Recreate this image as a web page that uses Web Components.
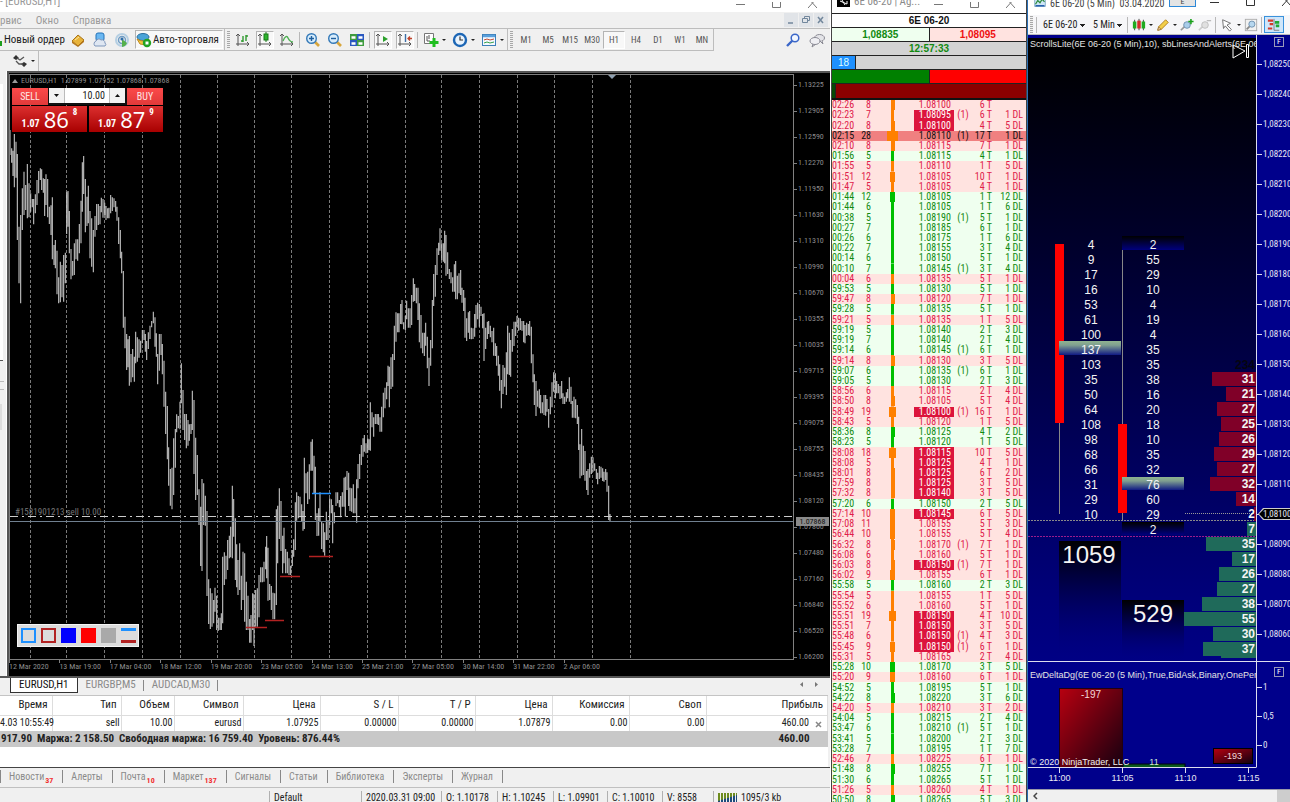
<!DOCTYPE html>
<html lang="ru">
<head>
<meta charset="utf-8">
<title>Trading desktop</title>
<style>
  html, body { margin: 0; height: 100%; }
  body { font-family: "Roboto Condensed", Roboto, "Liberation Sans", sans-serif; font-size: 11px; overflow: hidden; }
</style>
</head>
<body>
<trading-desktop></trading-desktop>
<script>
const RESET = `*{box-sizing:border-box}
button,input,select{font:inherit;color:inherit;margin:0;padding:0;border:0;background:none;border-radius:0}
a{color:inherit;text-decoration:none}table{border-collapse:collapse;border-spacing:0}svg{display:block}`;

class Widget extends HTMLElement {
  constructor() { super(); this.attachShadow({ mode: 'open' }); }
  connectedCallback() {
    const t = document.createElement('template');
    t.innerHTML = `<style>${RESET}${this.css()}</style>${this.html()}`;
    this.shadowRoot.replaceChildren(t.content.cloneNode(true));
  }
  css() { return ':host{display:block}'; }
  html() { return '<slot></slot>'; }
}
const define = (name, css, html) => customElements.define(name, class extends Widget {
  css() { return css; }
  html() { return typeof html === 'function' ? html(this) : html; }
});

/* ---------- icons ---------- */
const ICONS = {
  book: '<path d="M2 9 8 3l6 5-6 6z" fill="#e8b33a" stroke="#a8741a"/><path d="M2 9v2l6 4 6-5V8l-6 6z" fill="#b5761b"/><path d="M5 8l4-3" stroke="#fbe6a0"/>',
  cloudpc: '<rect x="4" y="1" width="8" height="8" rx="2" fill="#6bb8f2" stroke="#2573b8"/><path d="M3 14a3 3 0 0 1 1-5 3 3 0 0 1 5-1 3 3 0 0 1 4 3 2 2 0 0 1 0 3z" fill="#dfe7f2" stroke="#7f97bb"/>',
  signal: '<circle cx="8" cy="8" r="6" fill="none" stroke="#b5cfe3" stroke-width="2"/><circle cx="8" cy="8" r="3.5" fill="none" stroke="#6f9cc4" stroke-width="1.5"/><path d="M8 7v8a6 6 0 0 0 5-4z" fill="#55b04a"/><circle cx="8" cy="7" r="1.6" fill="#2d6da8"/>',
  auto: '<ellipse cx="7" cy="5" rx="6" ry="3.5" fill="#4aa3d8" stroke="#2a6fa0"/><path d="M1 7q6 4 12 0l-3 6-6-1z" fill="#f0c840" stroke="#c08a20"/><circle cx="11" cy="11" r="4.2" fill="#22a322"/><rect x="9.5" y="9.5" width="3" height="3" fill="#fff"/>',
  bars: '<path d="M3 2v12M1 12h13M1 4l2-2 2 2M12 10l2 2-2 2" fill="none" stroke="#555"/><path d="M8 4v6M6 9h2M11 3v6M11 4h2" stroke="#2f9a2f" stroke-width="1.4"/>',
  candles: '<path d="M3 2v12M1 12h13M1 4l2-2 2 2M12 10l2 2-2 2" fill="none" stroke="#555"/><path d="M9 0v10" stroke="#197a19"/><rect x="7" y="2" width="4" height="6" fill="#2db52d" stroke="#197a19"/>',
  line: '<path d="M3 2v12M1 12h13M1 4l2-2 2 2M12 10l2 2-2 2" fill="none" stroke="#555"/><path d="M4 9q3-7 5-3t5 4" fill="none" stroke="#4caf50" stroke-width="1.4"/>',
  zoomin: '<path d="M9 9l5 5" stroke="#d8a63c" stroke-width="2.6"/><circle cx="6.5" cy="6.5" r="4.8" fill="#d7ecfb" stroke="#3479b8" stroke-width="1.4"/><path d="M4 6.500h5M6.500 4v5" stroke="#1f5f9e" stroke-width="1.4"/>',
  zoomout: '<path d="M9 9l5 5" stroke="#d8a63c" stroke-width="2.6"/><circle cx="6.5" cy="6.5" r="4.8" fill="#d7ecfb" stroke="#3479b8" stroke-width="1.4"/><path d="M4 6.500h5" stroke="#1f5f9e" stroke-width="1.4"/>',
  tile: '<rect x="1" y="2" width="7" height="6" fill="#3f9b3f"/><rect x="8" y="2" width="7" height="6" fill="#2a58c0"/><rect x="1" y="8" width="7" height="6" fill="#2a58c0"/><rect x="8" y="8" width="7" height="6" fill="#3f9b3f"/><path d="M2.500 5.500h4M9.500 5.500h4M2.500 11.500h4M9.500 11.500h4" stroke="#fff" stroke-width="2.500"/>',
  shift: '<path d="M3 2v12M1 12h13M1 4l2-2 2 2M12 10l2 2-2 2" fill="none" stroke="#555"/><path d="M8 4l5 3-5 3z" fill="#2ca02c"/>',
  scroll: '<path d="M3 2v12M1 12h13M1 4l2-2 2 2M12 10l2 2-2 2" fill="none" stroke="#555"/><path d="M8.500 2v8" stroke="#3b6ea5" stroke-width="1.4"/><path d="M15 6.500h-4M13 4.500l-2 2 2 2" stroke="#c0432b" fill="none" stroke-width="1.3"/>',
  indicator: '<path d="M1.500 1.500h9v10h-9z" fill="#fff" stroke="#777"/><path d="M4 4v5h3M6 3v4" stroke="#555" fill="none"/><path d="M11 6v9M6.500 10.500h9" stroke="#1fbe1f" stroke-width="3"/>',
  clock: '<circle cx="8" cy="8" r="6" fill="#eaf4fd" stroke="#1c66b5" stroke-width="2.4"/><path d="M8 4.500V8h3" stroke="#333" fill="none" stroke-width="1.2"/>',
  template: '<rect x="1.500" y="2.500" width="13" height="11" fill="#f4f9ff" stroke="#3c7fb8"/><path d="M2 4h12" stroke="#5aa0dc" stroke-width="2.5"/><path d="M3 8l3-1 3 1 4-1" stroke="#c04a30" fill="none"/><path d="M3 11l3-1 3 1 4-1" stroke="#37a14a" fill="none"/>',
  search: '<path d="M8 8l-6 6" stroke="#3a66c8" stroke-width="2.4"/><circle cx="10" cy="6" r="3.800" fill="#f2f7ff" stroke="#3a66c8" stroke-width="1.500"/>',
  chat: '<ellipse cx="10.500" cy="6" rx="5" ry="3.500" fill="#e4e4e8" stroke="#8a8a94"/><path d="M13 9l1 3-3-3" fill="#efeff3" stroke="#8a8a94"/><path d="M4 12l-1 3 4-3" fill="#efeff3" stroke="#8a8a94"/><ellipse cx="6" cy="9" rx="5" ry="3.500" fill="#efeff3" stroke="#8a8a94"/>',
  objects: '<path d="M1 5l3-3 3 3-3 2zM9 11l3-2 3 2-3 3z" fill="#333"/><path d="M5 5l3 2 4-3M4 8l3 3h4" fill="none" stroke="#555" stroke-width="1.300"/>',
  ncandles: '<path d="M3 2v12M8 1v13M13 2v12" stroke="#333"/><rect x="1" y="4" width="4" height="8" fill="#1faa1f"/><rect x="6" y="3" width="4" height="9" fill="#d42a2a"/><rect x="11" y="4" width="4" height="8" fill="#1faa1f"/>',
  pencil: '<path d="M2 14l1-4 8-8 3 3-8 8z" fill="#f2cf4a" stroke="#a8781c"/><path d="M2 14l1-4 3 3z" fill="#e8c9a0" stroke="#805010" stroke-width=".6"/>',
  nzin: '<path d="M6 9l-5 5" stroke="#999" stroke-width="2"/><circle cx="8" cy="8" r="3.800" fill="#a9cdea" stroke="#6b8dac"/><path d="M12.500 1v6M9.500 4h6" stroke="#18a018" stroke-width="1.800"/>',
  nzout: '<path d="M6 9l-5 5" stroke="#ccc" stroke-width="2"/><circle cx="8" cy="8" r="3.800" fill="#e0e0e0" stroke="#bbb"/><path d="M10 3h5" stroke="#bbb" stroke-width="1.500"/>',
  cursor: '<path d="M3 2l9 4-4 2 5 5-2 2-5-6-2 3z" fill="#fff" stroke="#666"/>',
  nbox: '<rect x="1.500" y="1.500" width="13" height="13" fill="#f1f1f1" stroke="#aaa"/><path d="M7 9l-4 4" stroke="#888" stroke-width="2"/><circle cx="9" cy="7" r="3.500" fill="#b6d7ef" stroke="#6b8dac"/>',
  dom: '<path d="M1 3h6M3 7h4M1 12h5" stroke="#d43a2a" stroke-width="2.400"/><path d="M9 5h5M10 9h4" stroke="#22aa33" stroke-width="3"/><path d="M8 1v13h6" stroke="#777" fill="none"/>',
  nlogo: '<rect x="1" y="2" width="14" height="12" fill="#cfe6f7" stroke="#6f9dbd"/><path d="M2 11l3-5 3 3 3-5 3 4" stroke="#2c8b3c" fill="none" stroke-width="1.600"/><path d="M2 13h12" stroke="#2a62b0" stroke-width="2"/>'
};
define('ui-icon', ':host{display:inline-block;width:14px;height:14px;flex:none}svg{width:100%;height:100%}',
  el => `<svg viewBox="0 0 16 16" aria-hidden="true">${ICONS[el.getAttribute('name')] || ''}</svg>`);

/* icon button, with optional menu arrow */
define('tool-button', `:host{display:flex;width:22px;flex:none}
:host([menu]){width:29px}
button{flex:1;display:flex;align-items:center;justify-content:center;gap:3px;height:18px;border:1px solid transparent}
:host([on]) button{background:#f8f8f8;border-color:#b4b4b4 #fff #fff #b4b4b4;margin:0 2px}
:host([active]) button{background:#cfe6fa;border:1px solid #3a92dc;height:17px}
ui-icon{width:var(--icon,14px);height:var(--icon,14px)}
i{display:none;border:2px solid transparent;border-top-color:#222;border-bottom:0;flex:none}
:host([menu]) i{display:block}`,
  el => `<button type="button" aria-label="${el.getAttribute('name')}"><ui-icon name="${el.getAttribute('name')}"></ui-icon><i></i></button>`);

define('tool-sep', ':host{display:block;width:1px;height:16px;background:#b8b8b8;margin:0 2px 0 1px;flex:none}', '');
define('tool-grip', ':host{display:block;width:3px;height:17px;margin:0 2px;flex:none;background:repeating-linear-gradient(#a8a8a8 0 1px,#f0f0f0 1px 2px)}', '');

define('window-buttons', `:host{display:flex;align-items:center;color:#777;flex:none}
button{width:36px;height:8px;display:grid;place-items:center}`,
  () => `<button aria-label="Minimize"><svg width="9" height="8"><path d="M0 2.500h9" stroke="currentColor"/></svg></button>
<button aria-label="Maximize"><svg width="9" height="8"><path d="M.5-3V5.500h8V-3" fill="none" stroke="currentColor"/></svg></button>
<button aria-label="Close"><svg width="9" height="8"><path d="M0 6l9-10M9 6L0-4" stroke="currentColor"/></svg></button>`);

/* ---------- terminal window ---------- */
define('terminal-menu', `:host{display:flex;flex-direction:column;background:#f0f0f0}
.title{height:12px;background:#fff;display:flex;justify-content:space-between;color:#999;font-size:11px;line-height:4px}
.menu{height:16px;display:flex;align-items:center;gap:14px;color:#9b9b9b;font-size:11px}
.menu span{flex:1}.mdi{display:flex;gap:1px;margin-right:2px}
.mdi button{width:14px;height:14px;background:#e1e4e8;color:#72879c;display:grid;place-items:center}`,
`<div class="title"><span>- [EURUSD,H1]</span><window-buttons></window-buttons></div>
<nav class="menu"><a href="#service">рвис</a><a href="#window">Окно</a><a href="#help">Справка</a><span></span>
<div class="mdi"><button aria-label="Minimize chart"><svg width="8" height="8"><path d="M1 7h5" stroke="currentColor" stroke-width="1.500"/></svg></button>
<button aria-label="Restore chart"><svg width="8" height="8"><path d="M2.500 2.500v-2h5v4h-2M.5 2.500h5v4h-5z" fill="none" stroke="currentColor"/></svg></button>
<button aria-label="Close chart"><svg width="8" height="8"><path d="M1 1l5 6M6 1L1 7" stroke="currentColor" stroke-width="1.500"/></svg></button></div></nav>`);

define('terminal-toolbar', `:host{display:flex;flex-direction:column;background:#f0f0f0;color:#222;--icon:16px}
.row{display:flex;align-items:center;height:23px;border-top:1px solid #bdbdbd}
.group{display:flex;align-items:center;height:22px;border-right:1px solid #bdbdbd;border-bottom:1px solid #bdbdbd}
.order{width:67px;text-align:left;padding-left:2px;border-left:2px solid;border-image:linear-gradient(transparent 60%,#1d9d1d 60%) 1;white-space:nowrap}
.auto{display:flex;align-items:center;gap:1px;height:19px;width:88px;background:#f8f8f8;border:1px solid #b4b4b4;border-right-color:#fff;border-bottom-color:#fff;margin:0 1px 0 2px;white-space:nowrap}
.tf{width:22px;height:18px;font-size:9px;color:#555;border:1px solid transparent}
.tf.on{background:#f8f8f8;border-color:#b4b4b4 #fff #fff #b4b4b4}
.spacer{flex:1}.right{display:flex;gap:2px;padding-right:2px}
.second{height:20px;border:0}.second .group{height:20px;border-bottom:0;width:39px;padding-left:9px}
ui-icon{width:16px;height:16px}`,
`<div class="row"><div class="group"><button class="order">Новый ордер</button>
<tool-button name="book"></tool-button><tool-button name="cloudpc"></tool-button><tool-button name="signal"></tool-button>
<button class="auto"><ui-icon name="auto"></ui-icon>Авто-торговля</button></div>
<div class="group"><tool-grip></tool-grip><tool-button name="bars"></tool-button><tool-button name="candles" on></tool-button><tool-button name="line"></tool-button><tool-sep></tool-sep>
<tool-button name="zoomin"></tool-button><tool-button name="zoomout"></tool-button><tool-button name="tile"></tool-button><tool-sep></tool-sep>
<tool-button name="shift" on></tool-button><tool-button name="scroll" on></tool-button><tool-sep></tool-sep>
<tool-button name="indicator" menu></tool-button><tool-button name="clock" menu></tool-button><tool-button name="template" menu></tool-button></div>
<div class="group"><tool-grip></tool-grip>${['M1','M5','M15','M30','H1','H4','D1','W1','MN'].map(t => `<button class="tf${t === 'H1' ? ' on' : ''}">${t}</button>`).join('')}</div>
<span class="spacer"></span><div class="right"><tool-button name="search"></tool-button><tool-button name="chat"></tool-button></div></div>
<div class="row second"><div class="group"><tool-button name="objects" menu></tool-button></div></div>`);

/* price bars: x, high, low in thirds of a pixel, measured from the chart's origin */
const BARS = `30,0,75 35,55,98 39,62,138 43,12,172 48,35,143 52,72,330 57,290,460 62,255,520 67,175,300 72,125,255 77,165,240 82,102,265 87,160,262 92,190,245 97,207,232 101,207,283 106,193,250 111,150,225 116,123,190 121,115,150 125,118,180 130,145,188 134,147,258 138,133,225 143,147,262 148,230,282 153,226,315 157,202,388 162,345,405 166,330,415 171,362,493 176,442,520 181,395,517 186,405,502 191,375,515 196,368,460 200,187,312 204,183,290 208,243,370 213,357,448 218,393,437 223,340,435 228,328,388 233,328,392 238,282,370 243,212,340 247,97,245 251,78,192 256,147,307 261,200,288 265,167,280 270,243,385 275,265,410 280,300,427 285,258,320 290,222,300 295,222,285 300,228,283 304,203,247 309,207,263 314,218,255 318,228,270 323,235,265 327,233,265 332,195,250 337,202,243 342,205,232 347,213,245 351,230,272 356,262,342 361,300,385 365,365,430 370,423,593 375,560,655 380,612,720 384,628,712 388,618,767 393,672,757 398,657,742 403,680,755 407,605,700 412,622,695 417,628,683 422,632,668 427,600,640 432,600,630 436,612,665 440,633,690 445,607,657 450,587,627 455,573,592 460,545,580 465,562,650 469,610,680 473,672,763 478,612,722 483,612,675 487,642,733 492,692,830 497,785,912 502,828,988 506,952,1067 511,1017,1127 516,1013,1138 521,925,1095 526,897,1013 530,853,907 535,858,895 540,815,898 544,700,820 549,780,900 554,852,930 559,852,955 564,870,947 568,883,932 573,882,912 577,782,900 582,810,1032 587,923,1110 592,975,1095 597,1078,1185 602,1130,1308 606,1047,1323 611,1060,1185 616,1097,1187 621,1143,1398 626,1348,1482 631,1375,1497 636,1390,1490 641,1410,1480 645,1373,1445 650,1397,1500 655,1463,1502 660,1463,1500 664,1450,1500 668,1280,1480 673,1267,1365 678,1277,1348 683,1230,1320 688,1217,1285 692,1190,1282 697,1067,1285 701,1107,1220 706,1165,1350 710,1243,1372 714,1290,1395 719,1240,1380 724,1337,1440 729,1265,1410 734,1270,1475 739,1355,1500 744,1397,1500 749,1467,1538 753,1455,1538 758,1390,1500 762,1393,1548 767,1380,1490 772,1375,1490 777,1335,1462 782,1312,1357 787,1312,1357 792,1295,1355 797,1250,1318 800,1218,1345 804,1253,1412 809,1362,1410 814,1368,1440 819,1388,1468 824,1390,1468 829,1138,1425 833,1127,1300 838,1075,1227 843,1113,1263 848,1217,1330 852,1193,1300 857,1257,1330 862,1265,1330 867,1285,1335 872,1307,1335 877,1260,1308 881,1228,1280 886,1117,1260 890,1087,1172 895,1098,1165 900,1100,1162 905,1123,1175 909,1143,1202 913,983,1197 918,1030,1090 923,1025,1122 928,1003,1108 933,935,1022 937,928,1022 942,977,1092 946,1010,1170 951,1150,1218 956,1135,1217 960,1087,1175 965,1175,1257 970,1180,1267 974,1207,1277 979,1145,1230 984,1170,1230 989,1105,1185 994,1108,1150 998,1125,1240 1003,1147,1180 1008,1087,1128 1013,1087,1120 1018,1110,1132 1022,1098,1162 1027,1087,1130 1032,1043,1130 1036,1040,1160 1041,1023,1080 1046,1028,1128 1050,1073,1143 1055,1075,1145 1060,1063,1150 1065,1105,1150 1070,1048,1178 1074,1002,1075 1079,972,1047 1084,945,1005 1089,925,980 1093,915,965 1098,940,970 1103,925,968 1107,928,960 1111,817,962 1116,847,892 1121,862,920 1126,852,882 1131,852,882 1135,852,885 1140,862,905 1145,830,905 1150,788,862 1155,773,835 1160,757,808 1164,707,768 1168,710,832 1173,682,777 1178,672,770 1183,587,690 1188,547,635 1193,550,607 1197,550,607 1202,522,582 1206,510,583 1211,577,598 1216,557,600 1220,512,568 1225,535,593 1230,535,593 1235,495,585 1240,445,515 1244,462,513 1249,473,520 1254,473,570 1258,520,637 1263,555,655 1268,608,670 1273,608,678 1277,578,647 1282,620,715 1287,683,768 1292,630,707 1297,510,655 1301,432,528 1306,405,500 1311,355,435 1316,338,375 1320,295,362 1325,340,390 1330,340,395 1334,302,400 1338,315,437 1343,367,432 1348,417,447 1353,427,460 1358,442,485 1363,403,485 1367,393,508 1372,437,508 1377,430,490 1382,420,495 1386,473,518 1391,480,543 1395,503,623 1400,565,633 1405,547,608 1409,543,627 1414,593,628 1419,595,627 1424,552,620 1428,525,593 1433,518,568 1438,522,590 1443,530,558 1448,552,595 1452,550,693 1457,593,657 1462,575,627 1466,573,612 1471,587,622 1476,603,637 1481,593,677 1486,640,678 1490,648,707 1495,677,737 1499,703,782 1504,750,835 1509,705,792 1514,713,770 1519,667,795 1523,587,733 1528,608,735 1532,630,740 1537,597,665 1542,575,648 1547,575,618 1551,558,590 1556,563,602 1561,565,600 1566,573,602 1571,573,637 1575,585,640 1580,578,617 1585,582,615 1589,573,617 1594,590,700 1599,673,757 1603,733,825 1608,753,858 1613,782,830 1618,778,835 1622,795,850 1627,817,850 1632,795,855 1637,795,857 1641,807,845 1646,837,893 1651,800,853 1656,757,832 1661,727,785 1666,730,805 1670,753,790 1675,762,790 1680,768,807 1685,753,805 1689,790,822 1694,800,822 1699,787,815 1703,777,805 1708,742,815 1713,770,822 1717,813,863 1722,800,863 1727,808,865 1732,825,882 1736,860,960 1740,943,1045 1745,897,1037 1750,947,1035 1755,963,1052 1760,1023,1080 1764,1017,1095 1769,1000,1043 1774,980,1032 1779,982,1025 1784,1000,1022 1789,1017,1047 1793,1028,1063 1798,1008,1047 1803,1010,1043 1808,1015,1053 1812,1025,1055 1817,1017,1050 1821,1027,1085 1826,1067,1170 1830,1152,1175`
  .split(' ').map(s => s.split(',').map(n => n / 3));
const GRID_X = [30, 66, 104, 142, 180, 217, 254, 291, 329, 367, 405, 441, 479, 517, 554, 592, 630];
const MARKS = [[309, 556, 24], [280, 576, 20], [265, 620, 19], [246, 627, 21]];

define('one-click-trade', `:host{display:grid;grid-template-columns:75px 74px;gap:1px 2px;color:#fff;width:151px}
.top{grid-column:1/3;display:flex;height:17px}
.top>button{width:36px;font-size:10px;background:linear-gradient(#fb4a4a,#e23a3a);color:#ffe4e4}
.vol{flex:1;display:flex;background:#111;color:#222;padding:0 2px 2px 1px}
.vol button{width:15px;background:#f2f2f2;display:grid;place-items:center}
.vol input{flex:1;width:20px;min-width:0;text-align:right;padding-right:4px;background:#fff;font-size:10px;border-left:1px solid #bbb;border-right:1px solid #bbb}
.px{height:26px;background:linear-gradient(#dc2f2f,#a80000);display:flex;align-items:flex-end;justify-content:center;gap:4px;padding-bottom:3px}
.px small{font:bold 10px/11px "Roboto Condensed",sans-serif}.px b{font:22px/20px "Open Sans",sans-serif}.px sup{font:bold 9px/9px "Roboto Condensed",sans-serif;align-self:flex-start;padding-top:2px}`,
`<div class="top"><button>SELL</button><div class="vol"><button aria-label="Less"><svg width="5" height="3"><path d="M0 0h5L2.500 3z" fill="#111"/></svg></button><input aria-label="Volume" value="10.00"><button aria-label="More"><svg width="5" height="3"><path d="M0 3h5L2.500 0z" fill="#111"/></svg></button></div><button>BUY</button></div>
<button class="px"><small>1.07</small><b>86</b><sup>8</sup></button><button class="px"><small>1.07</small><b>87</b><sup>9</sup></button>`);

define('object-palette', `:host{display:flex;align-items:center;gap:5px;background:#dcdcdc;border:1px solid #f4f4f4;padding:0 3px;height:23px;width:122px}
button{width:15px;height:15px;flex:none}.lines{display:flex;flex-direction:column;justify-content:space-between}
.lines span{height:3px;background:#1e90ff}.lines span+span{background:#b22222}`,
`<button aria-label="Blue frame" style="border:2px solid #1e90ff"></button><button aria-label="Red frame" style="border:2px solid #b22222"></button>
<button aria-label="Blue" style="background:#00f"></button><button aria-label="Red" style="background:red"></button>
<button aria-label="Gray" style="background:#a9a9a9"></button><button class="lines" aria-label="Lines"><span></span><span></span></button>`);

define('price-chart', `:host{display:grid;grid-template-columns:minmax(0,1fr) 36px;grid-template-rows:minmax(0,1fr) 16px;background:#000;border-left:2px solid #555;border-top:2px solid #555;position:relative;color:#8c8c8c;font-size:8px;overflow:hidden}
.plot{width:100%;height:100%}
.plotbox{overflow:hidden;border:1px solid #808080;margin-top:1px}
ol{list-style:none;margin:0;padding:0}
.prices li{height:26px;line-height:26px;padding-left:4px;background:linear-gradient(#808080,#808080) 0 50%/3px 1px no-repeat}
.prices{margin-top:-1px;overflow:visible;height:0}
.dates{display:grid;grid-template-columns:repeat(12,1fr);width:605px;white-space:nowrap;line-height:14px}
.dates li{background:linear-gradient(#808080,#808080) 0 0/1px 3px no-repeat}
.head{position:absolute;left:3px;top:3px;line-height:10px;white-space:pre}
.head svg{display:inline-block;margin-right:3px}
.order{position:absolute;left:6px;top:434px;line-height:10px;font-size:9px;color:#777}
.tag{position:absolute;right:1px;top:444px;height:9px;line-height:9px;width:33px;text-align:center;background:#8a8a8a;color:#111}
one-click-trade{position:absolute;left:3px;top:15px}object-palette{position:absolute;left:8px;bottom:29px}`,
() => {
  const bars = BARS.map(([x, h, l]) => `M${x.toFixed(2)} ${(h + 130).toFixed(1)}V${(l + 130).toFixed(1)}`).join('');
  return `<div class="plotbox"><svg class="plot" role="img" aria-label="EURUSD H1">
${GRID_X.map(x => `<line x1="${x - 9.5}" x2="${x - 9.5}" y1="0" y2="100%" stroke="#7a7a7a" stroke-dasharray="3 2"/>`).join('')}
<g transform="translate(-10 -75)"><path d="${bars}" stroke="#c4c4c4" fill="none" stroke-width="1.100"/>
${MARKS.map(([x, y, w]) => `<path d="M${x} ${y + .5}h${w}" stroke="#b22222" stroke-width="1.500"/>`).join('')}
<path d="M312 493.500h19" stroke="#1e90ff" stroke-width="1.500"/><path d="M608 75h8l-4 4z" fill="#8fa0b0"/></g>
<line x1="0" x2="100%" y1="441.500" y2="441.500" stroke="#ccc" stroke-dasharray="8 4 2 4"/>
<line x1="0" x2="100%" y1="446.500" y2="446.500" stroke="#708090"/></svg></div>
<ol class="prices">${'1.13225 1.12905 1.12590 1.12270 1.11950 1.11630 1.11310 1.10990 1.10670 1.10355 1.10035 1.09715 1.09395 1.09075 1.08755 1.08435 1.08120 1.07800 1.07480 1.07160 1.06840 1.06520 1.06200'.split(' ').map(p => `<li>${p}</li>`).join('')}</ol>
<ol class="dates">${['12 Mar 2020','13 Mar 19:00','17 Mar 04:00','18 Mar 12:00','19 Mar 20:00','23 Mar 05:00','24 Mar 13:00','25 Mar 21:00','27 Mar 05:00','30 Mar 14:00','31 Mar 22:00','2 Apr 06:00'].map(d => `<li>${d}</li>`).join('')}</ol>
<div class="head"><svg width="6" height="4"><path d="M0 4h6L3 0z" fill="#999"/></svg>EURUSD,H1  1.07899 1.07952 1.07868 1.07868</div>
<div class="order">#1581901213 sell 10.00</div><div class="tag">1.07868</div>
<one-click-trade></one-click-trade><object-palette></object-palette>`;
});

define('watch-edge', `:host{display:block;background:#f0f0f0;border-right:1px solid #fff}
div{height:277px;margin-top:13px;background:#fff;border-bottom:1px solid #555;width:3px}
p{margin:20px 0 0;height:9px;border:solid #bbb;border-width:1px 0;width:4px}p+p{margin-top:14px;height:26px;background:#ddd;width:2px;border:0}`,
  '<div></div><p></p><p></p>');

define('chart-tabs', `:host{display:flex;height:19px;background:#f0f0f0;border-top:2px solid #555;padding-left:10px;align-items:flex-start;color:#8a8a8a;font-size:11px}
a{line-height:14px;padding:0 8px;white-space:nowrap;position:relative}
a+a::after{content:"";position:absolute;right:0;top:2px;height:11px;border-right:1px solid #888}
a.on{background:#fff;color:#111;border:1px solid #333;border-top:0}
span{flex:1}button{width:15px;height:13px}`,
`<a class="on" href="#eurusd">EURUSD,H1</a><a href="#eurgbp">EURGBP,M5</a><a href="#audcad">AUDCAD,M30</a><span></span>
<button aria-label="Previous"><svg width="3" height="5"><path d="M3 0v5L0 2.500z" fill="#777"/></svg></button><button aria-label="Next"><svg width="3" height="5"><path d="M0 0v5l3-2.500z" fill="#777"/></svg></button>`);

define('trade-table', `:host{display:block;background:#fff;border-top:1px solid #c4c4c4;height:72px;margin-right:2px;overflow:hidden}
table{width:100%;table-layout:fixed;text-align:right;color:#222}
th{font-weight:400;height:19px;padding:0 4px 0 0;border-right:1px solid #ddd;border-bottom:1px solid #ddd}
tbody td{height:16px;font-size:10px;padding:0 1px 0 0;border-right:1px solid #ddd;white-space:nowrap}
tbody td:first-child{text-align:left}
tbody td:last-child,tfoot td:last-child{padding-right:18px;position:relative}
tfoot td{background:#c8c8c8;height:15px;font-weight:700;white-space:nowrap}tfoot td:first-child{text-align:left}
button{position:absolute;right:5px;top:5px;width:7px;height:7px}
td,th{line-height:14px}`,
`<table><colgroup>${[52, 69, 53, 69, 77, 78, 77, 77, 77, 77].map(w => `<col style="width:${w}px">`).join('')}<col></colgroup>
<thead><tr>${['Время', 'Тип', 'Объем', 'Символ', 'Цена', 'S / L', 'T / P', 'Цена', 'Комиссия', 'Своп', 'Прибыль'].map(h => `<th scope="col">${h}</th>`).join('')}</tr></thead>
<tfoot><tr><td colspan="6">917.90&nbsp; Маржа: 2 158.50&nbsp; Свободная маржа: 16 759.40&nbsp; Уровень: 876.44%</td><td colspan="5">460.00</td></tr></tfoot>
<tbody><tr>${['4.03 10:55:49', 'sell', '10.00', 'eurusd', '1.07925', '0.00000', '0.00000', '1.07879', '0.00', '0.00'].map(h => `<td>${h}</td>`).join('')}<td>460.00<button aria-label="Close order"><svg width="7" height="7"><path d="M1 1l5 5M6 1L1 6" stroke="#888" stroke-width="1.500"/></svg></button></td></tr></tbody></table>`);

define('terminal-tabs', `:host{display:flex;height:20px;background:#f0f0f0;border-top:1px solid #444;color:#8a8a8a;padding-top:2px;font-size:10px}
a{line-height:13px;height:13px;padding:0 9px 0 8px;border-left:1px solid #888;white-space:nowrap}
a:last-child{border-right:1px solid #888}
sub{color:#f03030;font-size:8px;font-weight:700;line-height:0;vertical-align:-3px;margin-left:1px}`,
`<a href="#news">Новости<sub>37</sub></a><a href="#alerts">Алерты</a><a href="#mail">Почта<sub>10</sub></a><a href="#market">Маркет<sub>137</sub></a><a href="#signals">Сигналы</a><a href="#articles">Статьи</a><a href="#library">Библиотека</a><a href="#experts">Эксперты</a><a href="#journal">Журнал</a>`);

define('status-bar', `:host{display:flex;height:15px;background:#f0f0f0;border-top:1px solid #c0c0c0;color:#222;font-size:10px;padding-top:3px}
span{border-left:1px solid #b0b0b0;padding-left:4px;line-height:13px;white-space:nowrap;height:12px}
.gap{flex:0 0 269px;border:0}.net{display:flex;gap:4px;flex:1}.net svg{margin-top:1px}`,
`<span class="gap"></span><span style="flex:0 0 92px">Default</span><span style="flex:0 0 80px">2020.03.31 09:00</span><span style="flex:0 0 56px">O: 1.10178</span><span style="flex:0 0 56px">H: 1.10245</span><span style="flex:0 0 54px">L: 1.09901</span><span style="flex:0 0 55px">C: 1.10010</span><span style="flex:0 0 51px">V: 8558</span>
<span class="net"><svg width="19" height="11"><path d="M0 1h19v5L0 10z" fill="#6e8c1f"/><path d="M0 11V9l19-6v8z" fill="#1d4a7c"/><path d="M2.500 0v11M5.500 0v11M8.500 0v11M11.500 0v11M14.500 0v11M17.500 0v11" stroke="#f0f0f0"/></svg>1095/3 kb</span>`);

define('terminal-window', `:host{display:flex;flex-direction:column;min-width:0;background:#f0f0f0;overflow:hidden}
.work{flex:1;min-height:0;display:grid;grid-template-columns:7px minmax(0,1fr)}`,
`<terminal-menu></terminal-menu><terminal-toolbar></terminal-toolbar><div class="work"><watch-edge></watch-edge><price-chart></price-chart></div>
<chart-tabs></chart-tabs><trade-table></trade-table><terminal-tabs></terminal-tabs><status-bar></status-bar>`);

/* ---------- tape window ---------- */
/* side (r sell, g buy, R highlighted), x = boxed price; time, count, price, flag, trades, delta */
const TAPE = `r 02:26 8 100 0 6 -|rx 02:23 7 095 1 6 1|rx 02:20 8 100 0 4 5|R 02:15 28 110 1 17 1|r 02:10 8 115 0 7 1|g 01:56 5 115 0 4 1|r 01:55 5 110 0 1 5|r 01:51 12 105 0 10 1|r 01:47 5 105 0 4 1|g 01:44 12 105 0 1 12|g 01:44 6 105 0 1 6|g 00:38 5 190 1 5 1|g 00:27 7 185 0 6 1|g 00:26 6 175 0 1 6|g 00:22 7 155 0 3 4|g 00:14 6 150 0 5 1|g 00:10 7 145 1 3 4|r 00:04 6 135 0 5 1|g 59:53 5 130 0 5 1|r 59:47 8 120 0 7 1|g 59:28 5 135 0 5 1|r 59:21 5 135 0 1 5|g 59:19 5 140 0 2 3|g 59:19 7 140 0 2 4|g 59:14 6 145 1 6 1|r 59:14 8 130 0 3 5|g 59:07 6 135 1 6 1|g 59:05 5 130 0 2 3|r 58:56 6 115 0 2 4|r 58:50 8 105 0 5 4|rx 58:49 19 100 1 16 1|r 58:43 5 120 0 1 5|g 58:36 8 125 0 4 2|g 58:23 5 120 0 1 5|rx 58:08 18 115 0 10 5|rx 58:08 5 125 0 4 1|rx 58:01 8 125 0 6 2|rx 57:59 8 125 0 3 5|rx 57:32 8 140 0 3 5|g 57:20 6 150 0 2 5|rx 57:14 10 145 0 6 5|r 57:08 11 155 0 5 3|r 56:44 10 155 0 5 4|r 56:32 8 170 1 7 1|r 56:08 6 160 0 5 1|rx 56:03 8 150 1 7 1|r 56:02 9 155 0 6 1|g 55:58 5 160 0 2 3|r 55:54 5 155 0 1 5|r 55:52 6 160 0 5 1|rx 55:51 19 150 0 4 10|rx 55:51 7 150 0 3 5|rx 55:48 6 150 1 4 3|rx 55:45 9 150 1 6 1|r 55:31 5 165 0 2 4|g 55:28 10 170 0 3 5|r 55:20 9 160 0 6 1|g 54:52 5 195 0 5 1|g 54:22 8 220 0 3 6|r 54:20 5 210 0 3 2|g 54:04 5 215 0 2 4|g 53:47 6 210 1 5 1|g 53:41 5 200 0 2 3|g 53:28 7 195 0 1 7|r 52:46 7 225 0 6 1|g 51:48 8 255 0 7 1|g 51:30 6 265 0 5 1|r 51:26 5 260 0 4 1|g 50:50 8 265 0 5 3`.split('|').map(r => r.split(' '));
const barWidth = n => n > 25 ? 11 : n > 15 ? 7 : n > 8 ? 5 : n > 7 ? 4 : 3;

define('tape-list', `:host{display:flex;min-height:0;overflow:hidden;background:#fff;border-top:2px solid #111}
table{width:100%;table-layout:fixed;font-size:10px;height:calc(100% + 4px)}
tr{height:10px}td{padding:0;line-height:10px;text-align:right;white-space:nowrap}
td:first-child{text-align:left}td:last-child{padding-right:3px}
.r{background:#ffe3e0;color:#e0204a}.g{background:#efffef;color:#118a11}.R{background:#f08080;color:#111}
td.bar{position:relative;text-align:center;background:linear-gradient(var(--c),var(--c)) center/3px 100% no-repeat}
td.bar i{display:block;margin:0 auto;height:10px;background:var(--c)}
.r,.R{--c:#ff8000}.g{--c:#00c000}
td.price{padding-right:3px}.x td.price{background:#dc143c;color:#fff}td.flag{text-align:center}`,
() => `<table aria-label="Time and sales"><colgroup><col style="width:26px"><col style="width:13px"><col style="width:43px"><col style="width:40px"><col style="width:18px"><col style="width:20px"><col></colgroup><tbody>${TAPE.map(([s, t, n, p, f, k, d]) =>
  `<tr class="${s[0]}${s[1] ? ' x' : ''}"><td>${t}</td><td>${n}</td><td class="bar"><i style="width:${barWidth(+n)}px"></i></td><td class="price">1.08${p}</td><td class="flag">${+f ? '(1)' : ''}</td><td>${k} T</td><td>${d === '-' ? '' : d + ' DL'}</td></tr>`).join('')}</tbody></table>`);

define('tape-window', `:host{display:flex;flex-direction:column;min-width:0;background:#fff;border:solid #444;border-width:0 1px;overflow:hidden;font-family:"Liberation Sans",Arial,sans-serif}
.title{height:12px;display:flex;justify-content:space-between;padding-left:5px;color:#8a8a8a;font:11px/4px "Roboto Condensed",sans-serif;white-space:nowrap}
.title>span{display:flex;gap:4px}.logo{width:13px;height:7px;background:#000;flex:none}
.row{display:flex;height:14px;line-height:13px;border-top:1px solid #222;font-size:10px;font-weight:700;text-align:center;flex:none}
.row>*{flex:1}.row>*+*{border-left:1px solid #222}
tape-list{flex:1;font-family:"Roboto Condensed",Roboto,sans-serif}`,
`<div class="title"><span><svg class="logo" viewBox="0 0 13 7"><path d="M3 1l7 3M5 0l3 5M10 1v3" stroke="#fff"/></svg>6E 06-20 | Ag...</span><window-buttons></window-buttons></div>
<div class="row" style="margin-top:1px;color:#111"><span>6E 06-20</span></div>
<div class="row"><span style="background:#efffef;color:#118a11">1,08835</span><span style="background:#ffe3e0;color:#e11">1,08095</span></div>
<div class="row" style="background:#d3d3d3;color:#118a11"><span>12:57:33</span></div>
<div class="row" style="background:#d3d3d3"><span style="flex:0 0 23px;background:#1e90ff;color:#dff;font-weight:400">18</span><span></span></div>
<div class="row"><span style="background:#008000"></span><span style="background:red"></span></div>
<div class="row" style="height:15px"><span style="flex:0 0 3px;background:#064a06"></span><span style="background:#8b0000"></span></div>
<tape-list></tape-list>`);

/* ---------- footprint window ---------- */
const FOOT1 = [4, 9, 17, 16, 53, 61, 100, 137, 103, 35, 50, 64, 108, 98, 68, 66, 31, 29, 10];
const FOOT2 = [2, 55, 29, 10, 4, 19, 4, 35, 35, 38, 16, 20, 18, 10, 35, 32, 76, 60, 29, 2];
const DEPTH = [[31, 45], [21, 31], [27, 40], [25, 36], [26, 38], [29, 43], [27, 40], [32, 47], [14, 21], [2, 3], [7, 10], [35, 51], [17, 25], [26, 38], [27, 40], [38, 55], [55, 73], [30, 44], [37, 54]];

define('foot-plot', `:host{display:block;background:linear-gradient(#000 0,#000004 30px,#00007a 90%,#000084);border-top:3px solid #00008b;overflow:hidden;font-family:"Liberation Sans",Arial,sans-serif}
svg{width:100%;height:100%}`,
() => `<svg fill="#f4f4f4" role="img" aria-label="Footprint chart"><defs>
<linearGradient id="hi" x2="0" y2="1"><stop stop-color="#8fb38f"/><stop offset=".3" stop-color="#7f9f90"/><stop offset="1" stop-color="#101a84"/></linearGradient>
<linearGradient id="lo" x2="0" y2="1"><stop stop-color="#000"/><stop offset="1" stop-color="#00007e"/></linearGradient>
<linearGradient id="vol" x2="0" y2="1"><stop stop-color="#000"/><stop offset="1" stop-color="#000080" stop-opacity="0"/></linearGradient></defs>
<g transform="translate(-1028 -38)">
<path d="M1028 520.500H1257" stroke="#8a8a8a" stroke-dasharray="2 1"/><path d="M1028 536.500H1257" stroke="#9c1c8c" stroke-dasharray="2 1"/><path d="M1185 513.500H1257" stroke="#999" stroke-dasharray="1 1"/>
<path d="M1059.500 423V514M1122.500 250V520" stroke="#888"/>
<path d="M1055 244h9v179h-9zM1118 424h9v89h-9z" fill="#f00"/>
<rect x="1059" y="341" width="62" height="14" fill="url(#hi)"/><rect x="1122" y="477" width="62" height="13" fill="url(#hi)"/>
<rect x="1122" y="236" width="62" height="14" fill="url(#lo)"/><rect x="1122" y="522" width="62" height="13" fill="url(#lo)"/>
<rect x="1059" y="541" width="62" height="118" fill="url(#vol)"/><rect x="1122" y="600" width="62" height="60" fill="url(#vol)"/>
<g font-size="12" text-anchor="middle">${FOOT1.map((n, i) => `<text x="1091" y="${249 + i * 15}">${n}</text>`).join('')}${FOOT2.map((n, i) => `<text x="1153" y="${249 + i * 15}">${n}</text>`).join('')}</g>
<g font-size="24" text-anchor="middle"><text x="1089" y="563">1059</text><text x="1153" y="622">529</text></g>
${DEPTH.map(([n, w], i) => `<rect x="${1257 - w}" y="${372 + i * 15}" width="${w}" height="14" fill="${i < 10 ? '#800028' : '#1f6a5a'}"/>`).join('')}<rect x="1221" y="656" width="36" height="2" fill="#1f6a5a"/>
<g font-size="12" font-weight="700" text-anchor="end"><text x="1255" y="369" fill="#050510">234</text>${DEPTH.map(([n], i) => `<text x="1255" y="${383 + i * 15}">${n}</text>`).join('')}</g>
<text x="1030" y="47" font-size="9" fill="#e4e4e4">ScrollsLite(6E 06-20 (5 Min),10), sbLinesAndAlerts(6E 06-</text>
<path d="M1233 45v13l12-7zM1246.500 44.500h2v13h-2z" fill="none" stroke="#fff"/></g></svg>`);

define('delta-plot', `:host{display:block;overflow:hidden;font-family:"Liberation Sans",Arial,sans-serif}svg{width:100%;height:100%}`,
`<svg fill="#f0f0f0" font-size="9" role="img" aria-label="Delta chart"><defs><linearGradient id="d" x2="1" y2="1"><stop stop-color="#b80010"/><stop offset="1" stop-color="#100010"/></linearGradient></defs>
<g transform="translate(-1028 -663)"><rect x="1059.500" y="689.500" width="63" height="84" fill="url(#d)" stroke="#200010"/><rect x="1213.500" y="749.500" width="39" height="15" fill="url(#d)" stroke="#000"/>
<rect x="1123" y="765" width="62" height="5" fill="#0a5a20" stroke="#001"/>
<text x="1030" y="679" fill="#e4e4e4">EwDeltaDg(6E 06-20 (5 Min),True,BidAsk,Binary,OnePerD</text>
<g text-anchor="middle" fill="#f4d8d8"><text x="1091" y="699" font-size="10">-197</text><text x="1233" y="760">-193</text><text x="1154" y="766" fill="#cfe8cf">11</text></g>
<text x="1030" y="766">© 2020 NinjaTrader, LLC</text></g></svg>`);

define('foot-axis', `:host{display:block;overflow:hidden;background:#00008b;border-left:1px solid #dde;color:#e8e8f4;font-size:9px;position:relative}
ol{list-style:none;margin:0;padding:14px 0 0}li{height:30px;line-height:30px;padding-left:6px;background:linear-gradient(#dde,#dde) 0 50%/5px 1px no-repeat}
li.now{position:relative}li.now b{position:absolute;left:1px;right:0;top:9px;height:12px;line-height:12px;background:#ccc;font-weight:400;padding-left:5px;clip-path:polygon(0 50%,5px 0,100% 0,100% 100%,5px 100%);isolation:isolate}
li.now b::before{content:"";position:absolute;z-index:-1;inset:1px 0 1px 1px;background:#000;clip-path:polygon(0 50%,5px 0,100% 0,100% 100%,5px 100%)}
:host([lower]) ol{padding:11px 0 0}:host([lower]) li{height:29px;line-height:29px}
button{position:absolute;right:6px;top:2px;width:10px;height:10px;border:1px solid #99b;font-size:8px;line-height:8px;color:#fff}
:host([lower]) button{top:5px}`,
el => el.hasAttribute('lower')
  ? `<button>F</button><ol><li>1</li><li>0,5</li><li>0</li></ol>`
  : `<button>F</button><ol>${Array.from({ length: 20 }, (_, i) => { const p = '1,0' + (8250 - i * 10); return i === 15 ? `<li class="now"><b>${p}</b></li>` : `<li>${p}</li>`; }).join('')}</ol>`);

define('ninja-window', `:host{display:flex;flex-direction:column;min-width:0;background:#00008b;border-left:1px solid #2a6fb5;overflow:hidden}
.title{height:15px;background:#fff;display:flex;align-items:flex-start;color:#444;font-size:10px;line-height:7px;padding-left:6px;white-space:pre;overflow:hidden}
.title ui-icon{width:12px;height:12px;margin:-4px 4px 0 0}
.title span{width:116px;flex:none}
.title em{width:27px;height:7px;border:1px solid #2c88d8;border-top:0;background:#e4e4e4;font-style:normal;font-size:8px;line-height:3px;text-align:center;margin-left:3px;flex:none}
window-buttons{color:#333}
.bar{height:20px;background:#f6f6f8;display:flex;align-items:center;font-size:10px;color:#222;white-space:nowrap;border-bottom:1px solid #bbb;overflow:hidden}
select{appearance:none;height:16px;padding:0 11px 0 4px;background:conic-gradient(from -45deg at 50% 100%,#222 90deg,transparent 0) right 3px center/5px 3px no-repeat;background:linear-gradient(#222,#222) right 4px top 7px/5px 1px no-repeat,linear-gradient(#222,#222) right 5px top 8px/3px 1px no-repeat,linear-gradient(#222,#222) right 6px top 9px/1px 1px no-repeat;flex:none}
.bar tool-button{width:18px}.bar tool-button[menu]{width:24px}.bar tool-button[active]{width:20px}
.charts{flex:1;min-height:0;display:grid;grid-template-columns:minmax(0,1fr) 34px;grid-template-rows:minmax(0,1fr) 106px 21px}
foot-plot,delta-plot,.charts>foot-axis{border-bottom:1px solid #dde}.charts>foot-axis[lower]{border-bottom-color:transparent}
.times{display:flex;color:#e8e8f4;font:9px/20px "Liberation Sans",Arial,sans-serif;margin:0 -34px 0 0;padding:0;list-style:none}
.times li{width:63px;flex:none;text-align:center;background:linear-gradient(#dde,#dde) 50% 0/1px 5px no-repeat}
.foot{height:13px;background:#f0f0f0;display:flex;align-items:center;justify-content:space-between;border-top:1px solid #99a}
.foot button{width:14px;height:12px;display:grid;place-items:center}.foot i{width:13px;height:12px;background:#cdcdcd}`,
`<div class="title"><ui-icon name="nlogo"></ui-icon><span>6E 06-20 (5 Min)  03.04.2020</span><em>E</em><window-buttons></window-buttons></div>
<div class="bar"><tool-grip></tool-grip><tool-sep></tool-sep><select aria-label="Instrument"><option>6E 06-20</option></select><select aria-label="Interval"><option>5 Min</option></select><tool-sep></tool-sep>
<tool-button name="ncandles" menu></tool-button><tool-button name="pencil" menu></tool-button><tool-button name="nzin"></tool-button><tool-button name="nzout"></tool-button><tool-sep></tool-sep>
<tool-button name="cursor" menu></tool-button><tool-button name="nbox"></tool-button><tool-sep></tool-sep><tool-button name="dom" active></tool-button></div>
<div class="charts"><foot-plot></foot-plot><foot-axis></foot-axis><delta-plot></delta-plot><foot-axis lower></foot-axis><ul class="times"><li>11:00</li><li>11:05</li><li>11:10</li><li>11:15</li></ul></div>
<div class="foot"><button aria-label="Scroll left"><svg width="5" height="8"><path d="M4 1L1 4l3 3" fill="none" stroke="#444" stroke-width="1.500"/></svg></button><i></i></div>`);

define('trading-desktop', `:host{display:grid;grid-template-columns:minmax(0,1fr) 196px 263px;height:100vh;background:#1c3550}
terminal-window{border-right:1px solid #fff}`,
`<terminal-window></terminal-window><tape-window></tape-window><ninja-window></ninja-window>`);
</script>
</body>
</html>
